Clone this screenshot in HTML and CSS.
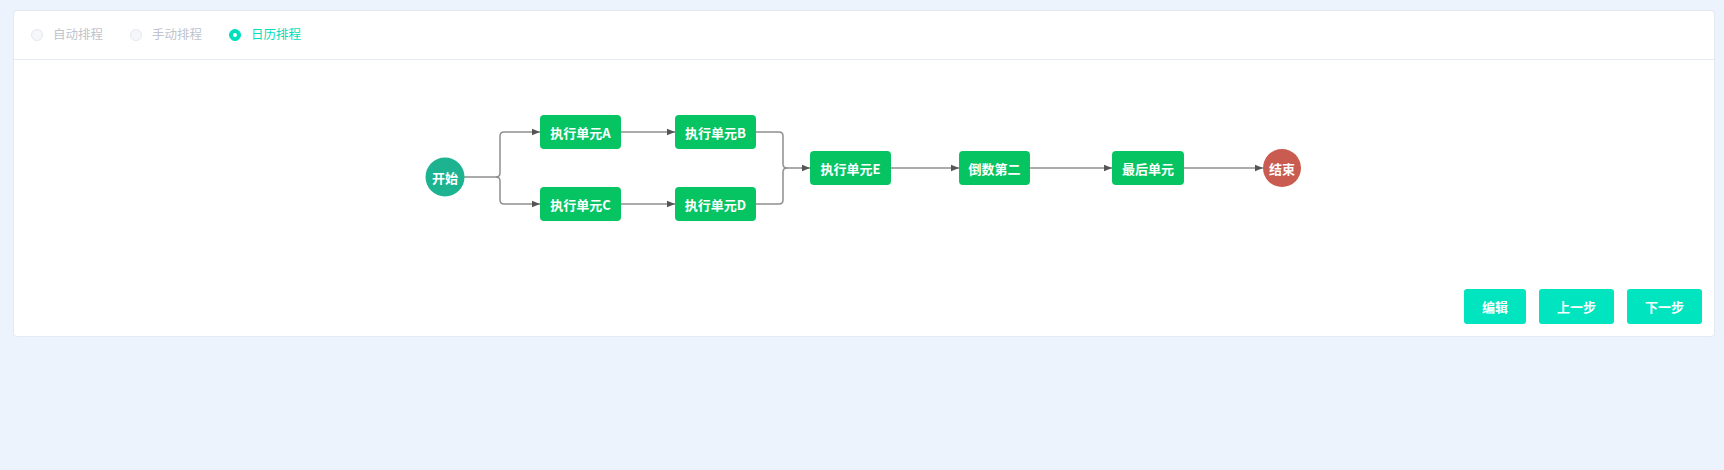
FILE: index.html
```html
<!DOCTYPE html>
<html lang="zh">
<head>
<meta charset="utf-8">
<title>排程</title>
<link rel="stylesheet" href="styles.css">
</head>
<body>
<div class="card">
  <div class="card-header">
    <label class="radio is-disabled"><span class="radio-input"></span><span class="radio-label">自动排程</span></label>
    <label class="radio is-disabled"><span class="radio-input"></span><span class="radio-label">手动排程</span></label>
    <label class="radio is-checked"><span class="radio-input"></span><span class="radio-label">日历排程</span></label>
  </div>
  <div class="card-body">
    <svg class="flow" width="1700" height="229" viewBox="14 60 1700 229" xmlns="http://www.w3.org/2000/svg">
      <defs>
        <marker id="arr" viewBox="0 0 10 10" refX="10" refY="5" markerWidth="8" markerHeight="8" markerUnits="userSpaceOnUse" orient="auto">
          <path d="M0,1 L10,5 L0,9 z" fill="#555"/>
        </marker>
      </defs>
      <g class="edges">
        <path d="M464,177 H496 Q500,177 500,173 V136 Q500,132 504,132 H540" marker-end="url(#arr)"/>
        <path d="M496,177 Q500,177 500,181 V200 Q500,204 504,204 H540" marker-end="url(#arr)"/>
        <path d="M621,132 H675" marker-end="url(#arr)"/>
        <path d="M621,204 H675" marker-end="url(#arr)"/>
        <path d="M756,132 H779 Q783,132 783,136 V164 Q783,168 787,168 H810" marker-end="url(#arr)"/>
        <path d="M756,204 H779 Q783,204 783,200 V172 Q783,168 787,168"/>
        <path d="M891,168 H959" marker-end="url(#arr)"/>
        <path d="M1030,168 H1112" marker-end="url(#arr)"/>
        <path d="M1184,168 H1263" marker-end="url(#arr)"/>
      </g>
      <g class="nodes">
        <circle class="n-start" cx="445" cy="177" r="19.5"/>
        <text class="n-text" x="445" y="177">开始</text>

        <rect class="n-task" x="540" y="115" width="81" height="34" rx="4"/>
        <text class="n-text" x="580.5" y="132">执行单元A</text>
        <rect class="n-task" x="675" y="115" width="81" height="34" rx="4"/>
        <text class="n-text" x="715.5" y="132">执行单元B</text>
        <rect class="n-task" x="540" y="187" width="81" height="34" rx="4"/>
        <text class="n-text" x="580.5" y="204">执行单元C</text>
        <rect class="n-task" x="675" y="187" width="81" height="34" rx="4"/>
        <text class="n-text" x="715.5" y="204">执行单元D</text>
        <rect class="n-task" x="810" y="151" width="81" height="34" rx="4"/>
        <text class="n-text" x="850.5" y="168">执行单元E</text>
        <rect class="n-task" x="959" y="151" width="71" height="34" rx="4"/>
        <text class="n-text" x="994.5" y="168">倒数第二</text>
        <rect class="n-task" x="1112" y="151" width="72" height="34" rx="4"/>
        <text class="n-text" x="1148" y="168">最后单元</text>

        <circle class="n-end" cx="1282" cy="168" r="19"/>
        <text class="n-text" x="1282" y="168">结束</text>
      </g>
    </svg>
    <div class="actions">
      <button class="btn">编辑</button>
      <button class="btn">上一步</button>
      <button class="btn">下一步</button>
    </div>
  </div>
</div>
</body>
</html>
```

FILE: styles.css
```css
html, body {
  margin: 0;
  padding: 0;
}
body {
  background: #ecf3fd;
  font-family: "Noto Sans CJK SC", "Noto Sans", sans-serif;
  width: 1724px;
  height: 470px;
  overflow: hidden;
}
.card {
  margin: 10px 9px 0 13px;
  background: #fff;
  border: 1px solid #e4e9f2;
  border-radius: 4px;
  box-sizing: border-box;
  width: 1702px;
}
.card-header {
  height: 49px;
  border-bottom: 1px solid #e6ebf3;
  display: flex;
  align-items: center;
  padding-left: 17px;
  padding-bottom: 1px;
  box-sizing: border-box;
  gap: 27px;
}
.radio {
  display: flex;
  align-items: center;
  gap: 10px;
  font-size: 12.5px;
  line-height: 1;
  color: #c0c4cc;
}
.radio-input {
  width: 12px;
  height: 12px;
  border-radius: 50%;
  box-sizing: border-box;
  border: 1px solid #e4e7ed;
  background: #f5f7fa;
  position: relative;
}
.radio.is-checked {
  color: #00e0bd;
}
.radio.is-checked .radio-input {
  background: #00e0bd;
  border-color: #00e0bd;
}
.radio.is-checked .radio-input::after {
  content: "";
  position: absolute;
  width: 4px;
  height: 4px;
  border-radius: 50%;
  background: #fff;
  left: 3px;
  top: 3px;
}
.card-body {
  display: flex;
  flex-direction: column;
}
.flow {
  display: block;
}
.edges path {
  fill: none;
  stroke: #8f8f8f;
  stroke-width: 1.5;
}
.n-task {
  fill: #07c462;
}
.n-start {
  fill: #1db391;
}
.n-end {
  fill: #c95b50;
}
.n-text {
  fill: #fff;
  font-family: "Noto Sans CJK SC", "Noto Sans", sans-serif;
  font-size: 13px;
  font-weight: 700;
  text-anchor: middle;
  dominant-baseline: central;
}
.actions {
  display: flex;
  justify-content: flex-end;
  gap: 13px;
  padding: 0 12px 12px 0;
}
.btn {
  height: 35px;
  padding: 0 18px;
  border: none;
  border-radius: 3px;
  background: #00e4c0;
  color: #fff;
  font-family: "Noto Sans CJK SC", "Noto Sans", sans-serif;
  font-size: 13px;
  font-weight: 700;
  line-height: 1;
}
```
